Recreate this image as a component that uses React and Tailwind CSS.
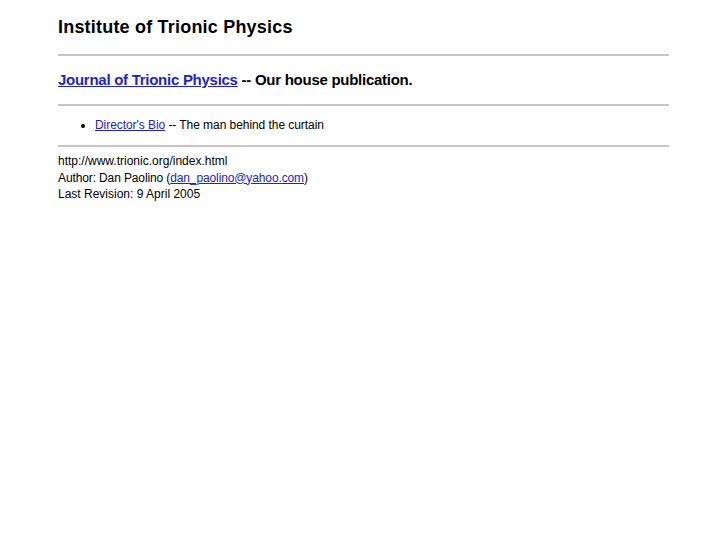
export default function App() {
  const font = { fontFamily: '"Liberation Sans", Arial, Helvetica, sans-serif' };
  return (
    <div className="min-h-[545px] bg-white px-[58px] text-black" style={font}>
      <h1 className="pt-[17px] text-[18px] font-bold leading-[20px] tracking-[0.2px]">Institute of Trionic Physics</h1>
      <div className="mt-[17px] h-[2px] bg-[#c6c6c6]" />
      <p className="mt-[15px] text-[15px] font-bold leading-[17px] tracking-[-0.27px]">
        <a href="#" className="text-[#2222cc] underline">Journal of Trionic Physics</a> -- Our house publication.
      </p>
      <div className="mt-[16px] h-[2px] bg-[#c6c6c6]" />
      <ul className="mt-[12px] list-disc pl-[37px] text-[12px] leading-[14px] tracking-[-0.06px]">
        <li>
          <a href="#" className="text-[#2222cc] underline">Director's Bio</a> -- The man behind the curtain
        </li>
      </ul>
      <div className="mt-[13px] h-[2px] bg-[#c6c6c6]" />
      <div className="mt-[6px] text-[12px] leading-[16.5px]">
        <div>http://www.trionic.org/index.html</div>
        <div className="tracking-[-0.12px]">
          Author: Dan Paolino (<a href="#" className="text-[#2222cc] underline">dan_paolino@yahoo.com</a>)
        </div>
        <div>Last Revision: 9 April 2005</div>
      </div>
    </div>
  );
}
